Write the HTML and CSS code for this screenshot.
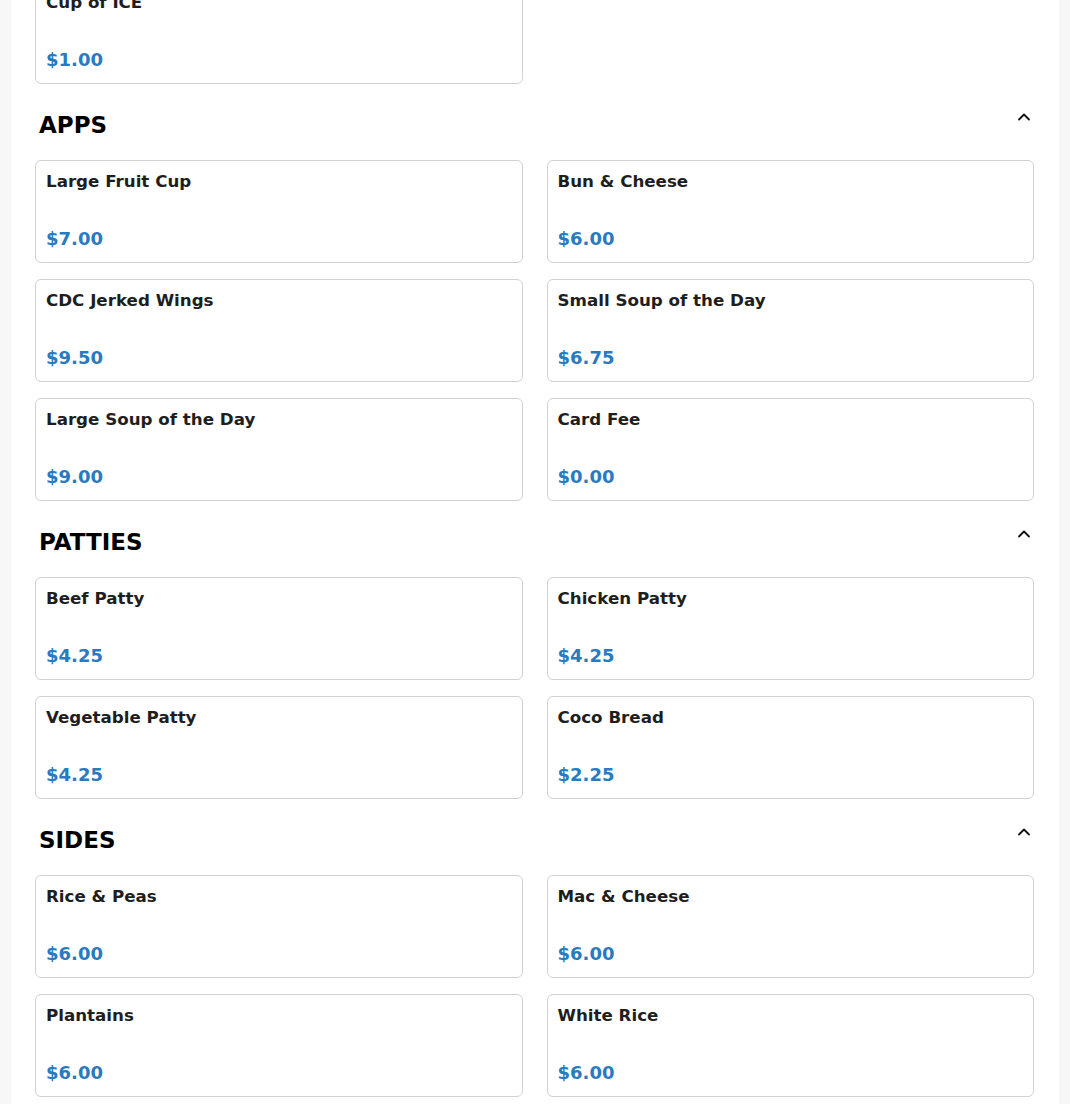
FILE: index.html
```html
<!DOCTYPE html>
<html lang="en">
<head>
<meta charset="utf-8">
<title>Menu</title>
<link rel="stylesheet" href="styles.css">
</head>
<body>
<main class="menu">
  <section class="section section-first">
    <div class="grid">
      <div class="card"><div class="item-name">Cup of ICE</div><div class="item-price">$1.00</div></div>
    </div>
  </section>

  <section class="section">
    <div class="section-head">
      <h2>APPS</h2>
      <button class="toggle" aria-label="Collapse"><svg width="16" height="16" viewBox="0 0 16 16"><path d="M2 7.5 L7 2.5 L12 7.5" fill="none" stroke="#111" stroke-width="1.8" stroke-linecap="round" stroke-linejoin="round"/></svg></button>
    </div>
    <div class="grid">
      <div class="card"><div class="item-name">Large Fruit Cup</div><div class="item-price">$7.00</div></div>
      <div class="card"><div class="item-name">Bun &amp; Cheese</div><div class="item-price">$6.00</div></div>
      <div class="card"><div class="item-name">CDC Jerked Wings</div><div class="item-price">$9.50</div></div>
      <div class="card"><div class="item-name">Small Soup of the Day</div><div class="item-price">$6.75</div></div>
      <div class="card"><div class="item-name">Large Soup of the Day</div><div class="item-price">$9.00</div></div>
      <div class="card"><div class="item-name">Card Fee</div><div class="item-price">$0.00</div></div>
    </div>
  </section>

  <section class="section">
    <div class="section-head">
      <h2>PATTIES</h2>
      <button class="toggle" aria-label="Collapse"><svg width="16" height="16" viewBox="0 0 16 16"><path d="M2 7.5 L7 2.5 L12 7.5" fill="none" stroke="#111" stroke-width="1.8" stroke-linecap="round" stroke-linejoin="round"/></svg></button>
    </div>
    <div class="grid">
      <div class="card"><div class="item-name">Beef Patty</div><div class="item-price">$4.25</div></div>
      <div class="card"><div class="item-name">Chicken Patty</div><div class="item-price">$4.25</div></div>
      <div class="card"><div class="item-name">Vegetable Patty</div><div class="item-price">$4.25</div></div>
      <div class="card"><div class="item-name">Coco Bread</div><div class="item-price">$2.25</div></div>
    </div>
  </section>

  <section class="section">
    <div class="section-head">
      <h2>SIDES</h2>
      <button class="toggle" aria-label="Collapse"><svg width="16" height="16" viewBox="0 0 16 16"><path d="M2 7.5 L7 2.5 L12 7.5" fill="none" stroke="#111" stroke-width="1.8" stroke-linecap="round" stroke-linejoin="round"/></svg></button>
    </div>
    <div class="grid">
      <div class="card"><div class="item-name">Rice &amp; Peas</div><div class="item-price">$6.00</div></div>
      <div class="card"><div class="item-name">Mac &amp; Cheese</div><div class="item-price">$6.00</div></div>
      <div class="card"><div class="item-name">Plantains</div><div class="item-price">$6.00</div></div>
      <div class="card"><div class="item-name">White Rice</div><div class="item-price">$6.00</div></div>
    </div>
  </section>
</main>
</body>
</html>
```

FILE: styles.css
```css
html, body {
  margin: 0;
  padding: 0;
  background: #f7f7f7;
  font-family: "DejaVu Sans", "Liberation Sans", sans-serif;
  color: #1c1c1c;
}

.menu {
  width: 1048px;
  box-sizing: border-box;
  margin: 0 0 0 11px;
  padding: 0 25px 24px 24px;
  background: #ffffff;
}

.section-first {
  margin-top: -19px;
}

.section-head {
  display: flex;
  justify-content: space-between;
  align-items: flex-start;
  padding: 28px 1px 0 4px;
  margin-bottom: 22px;
}

.section-head h2 {
  margin: 0;
  font-size: 23px;
  line-height: 26px;
  font-weight: 700;
  color: #000;
}

.toggle {
  border: 0;
  background: none;
  padding: 0;
  margin: 0;
  width: 16px;
  height: 16px;
  display: flex;
  cursor: pointer;
}

.grid {
  display: grid;
  grid-template-columns: 1fr 1fr;
  column-gap: 24px;
  row-gap: 16px;
}

.card {
  border: 1px solid #d2d2d2;
  border-radius: 6px;
  padding: 10px;
  display: flex;
  flex-direction: column;
  background: #fff;
}

.item-name {
  font-size: 16.7px;
  line-height: 20px;
  font-weight: 700;
  color: #1e1e1e;
  margin-bottom: 34px;
}

.item-price {
  font-size: 18px;
  line-height: 27px;
  font-weight: 700;
  color: #2a7abf;
}
```
